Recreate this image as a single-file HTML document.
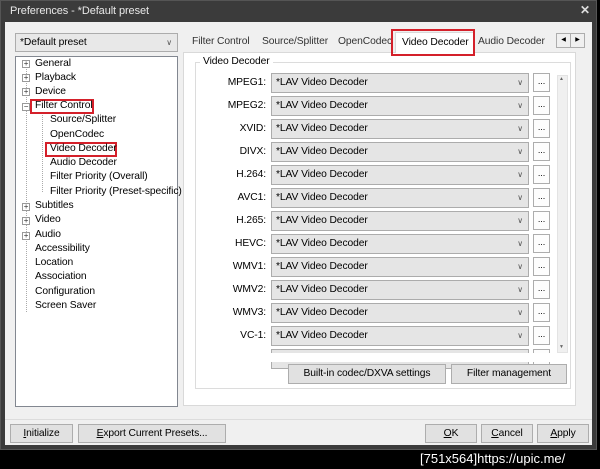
<!DOCTYPE html>
<html><head><style>
*{box-sizing:border-box;margin:0;padding:0}
body{width:600px;height:469px;background:#000;position:relative;overflow:hidden;font-family:"Liberation Sans",sans-serif;font-size:10.3px;letter-spacing:-0.1px;color:#000}
.a{position:absolute}
.win{left:0;top:0;width:597px;height:450px;background:#3b3b3b;border:1px solid #555}
.client{left:5px;top:22px;width:587px;height:423px;background:#f0f0f0}
.title{left:10px;top:5px;color:#e8e8e8;font-size:11px}
.btn{background:#e1e1e1;border:1px solid #adadad;text-align:center;line-height:17px}
.combo{background:#e5e5e5;border:1px solid #acacac;padding-left:4px;line-height:18px}
.combo:after{content:"\2228";position:absolute;right:5px;top:0;color:#555;font-size:8px}
.lbl{text-align:right;width:70px}
.dot{width:17px;height:19px;background:#fdfdfd;border:1px solid #adadad;text-align:center;font-size:9px;line-height:14px}
.tree{left:15px;top:56px;width:163px;height:351px;background:#fff;border:1px solid #828790}
.ti{position:absolute;white-space:nowrap}
.pl{position:absolute;width:8px;height:8px;border:1px solid #999;background:#fff;font-size:8px;line-height:6px;text-align:center;color:#333}
.red{border:2px solid #d4202a}
</style></head><body>
<div class="a win"></div>
<div class="a title">Preferences - *Default preset</div>
<div class="a" style="left:580px;top:3px;color:#ddd;font-size:12px;font-weight:bold">✕</div>
<div class="a client"></div>

<div class="a combo" style="left:15px;top:33px;width:163px;height:19px;background:#e8e8e8">*Default preset</div>

<div class="a tree"></div>
<div class="a" style="left:26px;top:66px;width:0;height:246px;border-left:1px dotted #aaa"></div>
<div class="a" style="left:42px;top:115px;width:0;height:77px;border-left:1px dotted #aaa"></div>
<div class="pl" style="left:22px;top:60px">+</div><div class="ti" style="left:35px;top:58px">General</div>
<div class="pl" style="left:22px;top:74px">+</div><div class="ti" style="left:35px;top:72px">Playback</div>
<div class="pl" style="left:22px;top:88px">+</div><div class="ti" style="left:35px;top:86px">Device</div>
<div class="pl" style="left:22px;top:103px">−</div><div class="a red" style="left:30px;top:99px;width:64px;height:15px"></div><div class="ti" style="left:35px;top:100px">Filter Control</div>
<div class="ti" style="left:50px;top:114px">Source/Splitter</div>
<div class="ti" style="left:50px;top:129px">OpenCodec</div>
<div class="a red" style="left:45px;top:142px;width:72px;height:15px"></div><div class="ti" style="left:50px;top:143px">Video Decoder</div>
<div class="ti" style="left:50px;top:157px">Audio Decoder</div>
<div class="ti" style="left:50px;top:171px">Filter Priority (Overall)</div>
<div class="ti" style="left:50px;top:186px">Filter Priority (Preset-specific)</div>
<div class="pl" style="left:22px;top:203px">+</div><div class="ti" style="left:35px;top:200px">Subtitles</div>
<div class="pl" style="left:22px;top:217px">+</div><div class="ti" style="left:35px;top:214px">Video</div>
<div class="pl" style="left:22px;top:232px">+</div><div class="ti" style="left:35px;top:229px">Audio</div>
<div class="ti" style="left:35px;top:243px">Accessibility</div>
<div class="ti" style="left:35px;top:257px">Location</div>
<div class="ti" style="left:35px;top:271px">Association</div>
<div class="ti" style="left:35px;top:286px">Configuration</div>
<div class="ti" style="left:35px;top:300px">Screen Saver</div>

<div class="a" style="left:183px;top:52px;width:393px;height:354px;background:#fff;border:1px solid #d9d9d9"></div>
<div class="a" style="left:192px;top:36px;color:#333">Filter Control</div>
<div class="a" style="left:262px;top:36px;color:#333">Source/Splitter</div>
<div class="a" style="left:338px;top:36px;color:#333">OpenCodec</div>
<div class="a" style="left:395px;top:32px;width:79px;height:21px;background:#fff;border:1px solid #d9d9d9;border-bottom:none"></div>
<div class="a red" style="left:391px;top:29px;width:84px;height:27px"></div>
<div class="a" style="left:402px;top:37px">Video Decoder</div>
<div class="a" style="left:478px;top:36px;color:#333">Audio Decoder</div>
<div class="a" style="left:556px;top:33px;width:15px;height:15px;background:#f0f0f0;border:1px solid #adadad;font-size:6px;line-height:13px;text-align:center">◀</div>
<div class="a" style="left:570px;top:33px;width:15px;height:15px;background:#f0f0f0;border:1px solid #adadad;font-size:6px;line-height:13px;text-align:center">▶</div>

<div class="a" style="left:195px;top:62px;width:376px;height:327px;border:1px solid #dcdcdc"></div>
<div class="a" style="left:200px;top:56px;background:#fff;padding:0 3px">Video Decoder</div>

<div id="rows"></div>
<div class="a" style="left:196px;top:353px;width:374px;height:9px;background:#fff"></div>
<div class="a" style="left:557px;top:75px;width:11px;height:278px;background:#f0f0f0;border:1px solid #e3e3e3"></div>
<div class="a" style="left:559px;top:76px;font-size:5px;color:#666">▲</div>
<div class="a" style="left:559px;top:344px;font-size:5px;color:#666">▼</div>

<div class="a btn" style="left:288px;top:364px;width:158px;height:20px;line-height:18px">Built-in codec/DXVA settings</div>
<div class="a btn" style="left:451px;top:364px;width:116px;height:20px;line-height:18px">Filter management</div>

<div class="a" style="left:5px;top:419px;width:587px;height:1px;background:#dcdcdc"></div>
<div class="a btn" style="left:10px;top:424px;width:63px;height:19px"><u>I</u>nitialize</div>
<div class="a btn" style="left:78px;top:424px;width:148px;height:19px"><u>E</u>xport Current Presets...</div>
<div class="a btn" style="left:425px;top:424px;width:52px;height:19px"><u>O</u>K</div>
<div class="a btn" style="left:481px;top:424px;width:52px;height:19px"><u>C</u>ancel</div>
<div class="a btn" style="left:537px;top:424px;width:52px;height:19px"><u>A</u>pply</div>

<div class="a" style="left:420px;top:451px;color:#fff;font-family:'Liberation Sans Narrow','Liberation Sans',sans-serif;font-size:13px;letter-spacing:0">[751x564]https://upic.me/</div>

<script>
var L=["MPEG1:","MPEG2:","XVID:","DIVX:","H.264:","AVC1:","H.265:","HEVC:","WMV1:","WMV2:","WMV3:","VC-1:",""];
var h="";
for(var i=0;i<L.length;i++){var y=73+i*23;
h+='<div class="a lbl" style="left:196px;top:'+(y+4)+'px">'+L[i]+'</div>';
h+='<div class="a combo" style="left:271px;top:'+y+'px;width:258px;height:20px">'+(L[i]?'*LAV Video Decoder':'')+'</div>';
h+='<div class="a dot" style="left:533px;top:'+y+'px">...</div>';}
document.getElementById("rows").innerHTML=h;
</script>
</body></html>
